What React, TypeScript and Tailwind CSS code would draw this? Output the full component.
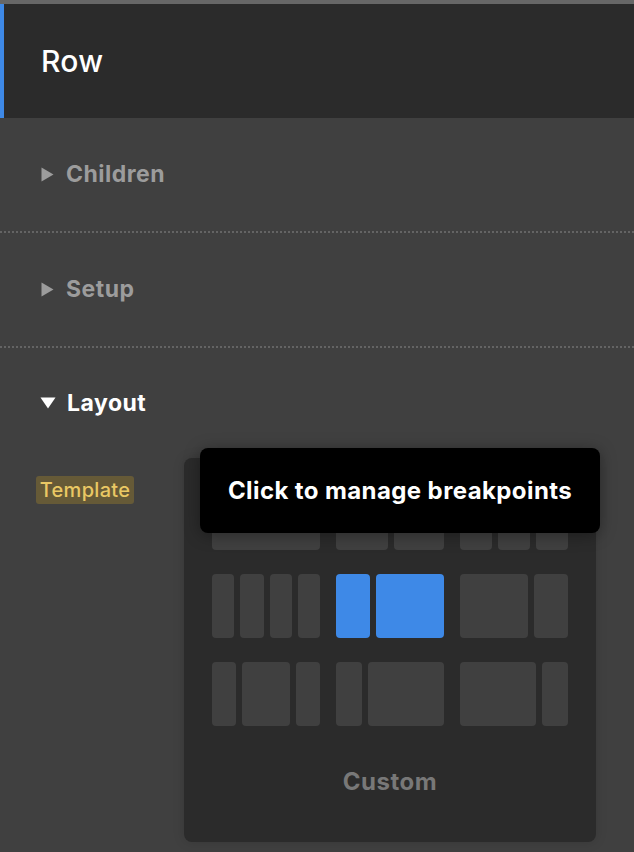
import React from "react";

const font = { fontFamily: "Inter, 'Noto Sans', sans-serif" };

function Caret({ open }: { open?: boolean }) {
    if (open) {
        return (
            <svg width="16" height="12" viewBox="0 0 16 12" className="shrink-0">
                <polygon points="0.5,0.5 15.5,0.5 8,11.5" fill="currentColor" />
            </svg>
        );
    }
    return (
        <svg width="13" height="15" viewBox="0 0 13 15" className="shrink-0">
            <polygon points="0.5,0.5 12.5,7.5 0.5,14.5" fill="currentColor" />
        </svg>
    );
}

function Divider() {
    return <div className="h-[2px] w-full bg-[linear-gradient(to_right,#646464_50%,transparent_50%)] bg-[length:4px_2px]" />;
}

function Section({ title }: { title: string }) {
    return (
        <div className="h-[113px] flex items-center gap-[12px] pl-[41px] text-[#9c9c9c]">
            <Caret />
            <span className="text-[23px] font-bold tracking-[0.5px]">{title}</span>
        </div>
    );
}

// widths in px for each block, per group
const rows: { w: number[]; blue?: boolean }[][] = [
    [{ w: [108] }, { w: [52, 50] }, { w: [32, 32, 32] }],
    [{ w: [22, 24, 22, 22] }, { w: [34, 68], blue: true }, { w: [68, 34] }],
    [{ w: [24, 48, 24] }, { w: [26, 76] }, { w: [76, 26] }],
];

function TemplatePanel() {
    return (
        <div className="relative w-[412px] h-[384px] rounded-lg bg-[#2b2b2b] shadow-[0_0_12px_rgba(0,0,0,0.15)]">
            <div className="flex flex-col gap-6 pt-7 px-7">
                {rows.map((row, i) => (
                    <div key={i} className="flex gap-4">
                        {row.map((g, j) => (
                            <div key={j} className="flex gap-[6px] w-[108px]">
                                {g.w.map((w, k) => (
                                    <div
                                        key={k}
                                        className={"h-16 rounded-[4px] " + (g.blue ? "bg-[#3e89e7]" : "bg-[#404040]")}
                                        style={{ width: w }}
                                    />
                                ))}
                            </div>
                        ))}
                    </div>
                ))}
            </div>
            <div className="h-[116px] flex items-center justify-center pb-1">
                <span className="text-[24px] font-bold tracking-[0.5px] text-[#787878]">Custom</span>
            </div>

            {/* tooltip */}
            <div className="absolute left-4 -top-[10px] w-[400px] h-[85px] rounded-lg bg-black flex items-center justify-center shadow-[0_2px_16px_rgba(0,0,0,0.35)]">
                <span className="text-white text-[24px] font-bold tracking-[0.4px]">Click to manage breakpoints</span>
            </div>
        </div>
    );
}

export default function App() {
    return (
        <div className="w-[634px] h-[852px] bg-[#404040] overflow-hidden" style={font}>
            <div className="h-[4px] bg-[#676767]" />
            <div className="h-[114px] bg-[#2b2b2b] flex items-center border-l-4 border-[#3e89e7] pl-[37px]">
                <span className="text-white text-[30px] font-medium tracking-[0.3px]">Row</span>
            </div>

            <Section title="Children" />
            <Divider />
            <Section title="Setup" />
            <Divider />

            <div className="h-[110px] flex items-center gap-[11px] pl-[40px] text-white">
                <Caret open />
                <span className="text-[23px] font-bold tracking-[0.5px]">Layout</span>
            </div>

            <div className="flex pl-[36px]">
                <div className="mt-[18px] w-[98px] h-[28px] rounded-[3px] bg-[#665a37] flex items-center justify-center">
                    <span className="text-[20px] font-medium tracking-[0.3px] text-[#eac864]">Template</span>
                </div>
                <div className="ml-[50px]">
                    <TemplatePanel />
                </div>
            </div>
        </div>
    );
}
